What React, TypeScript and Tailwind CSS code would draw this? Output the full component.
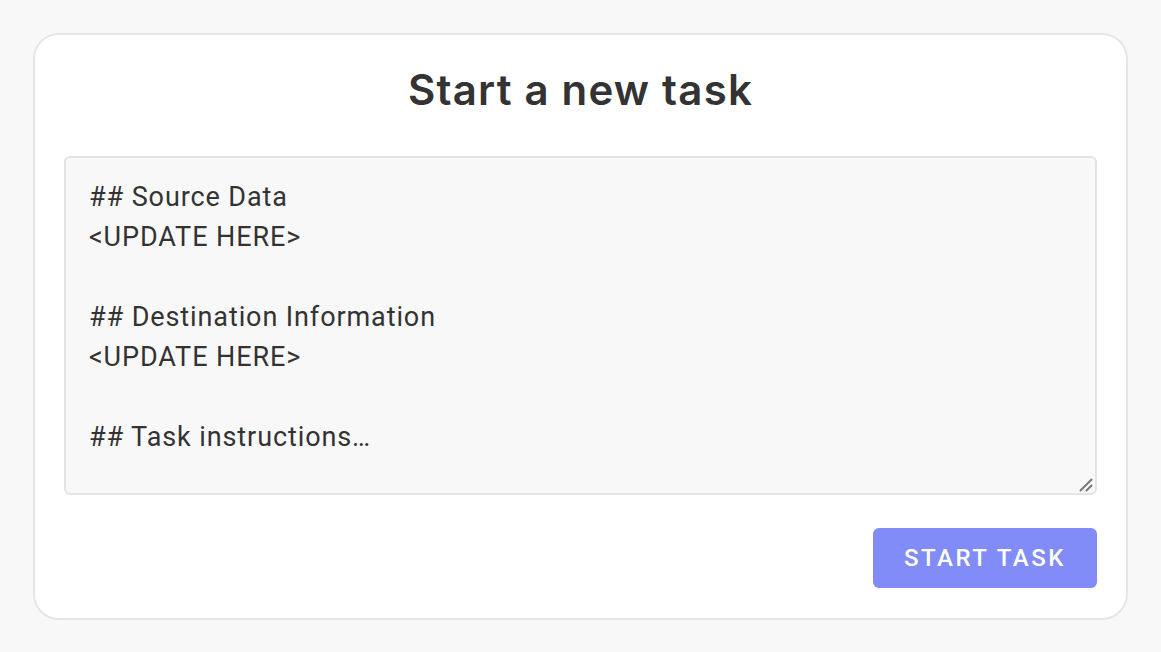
import React from "react";

const initial = `## Source Data
<UPDATE HERE>

## Destination Information
<UPDATE HERE>

## Task instructions…`;

export default function App() {
  return (
    <div className="min-h-[652px] w-full bg-[#f8f8f8] px-[33px] pt-[33px] pb-[33px]" style={{ fontFamily: "Roboto, 'Liberation Sans', sans-serif" }}>
      <div className="rounded-[26px] border-2 border-[#e6e6e6] bg-white px-[29px] pt-[31px] pb-[30px] flex flex-col">
        <h1 className="text-center text-[42px] leading-[48px] font-semibold text-[#333333] tracking-[1.2px]" style={{ fontFamily: "Inter, 'Noto Sans', sans-serif" }}>
          Start a new task
        </h1>
        <div className="relative mt-[42px]">
          <textarea
            defaultValue={initial}
            className="block h-[339px] w-full resize-none rounded-[6px] border-2 border-[#e4e4e4] bg-[#f8f8f8] px-[23px] py-[19px] text-[27px] leading-[40px] tracking-[0.9px] text-[#333333] outline-none"
            style={{ fontFamily: "Roboto, 'Liberation Sans', sans-serif" }}
          />
          <svg className="pointer-events-none absolute bottom-[3px] right-[4px]" width="14" height="14" viewBox="0 0 14 14">
            <line x1="1.5" y1="12.5" x2="12.5" y2="1.5" stroke="#777777" strokeWidth="2" strokeLinecap="round" />
            <line x1="7.5" y1="12.5" x2="12.5" y2="7.5" stroke="#777777" strokeWidth="2" strokeLinecap="round" />
          </svg>
        </div>
        <div className="mt-[33px] flex justify-end">
          <button className="h-[60px] w-[224px] rounded-[6px] bg-[#818cf8] text-[24px] font-medium tracking-[2.5px] text-white">
            START TASK
          </button>
        </div>
      </div>
    </div>
  );
}
